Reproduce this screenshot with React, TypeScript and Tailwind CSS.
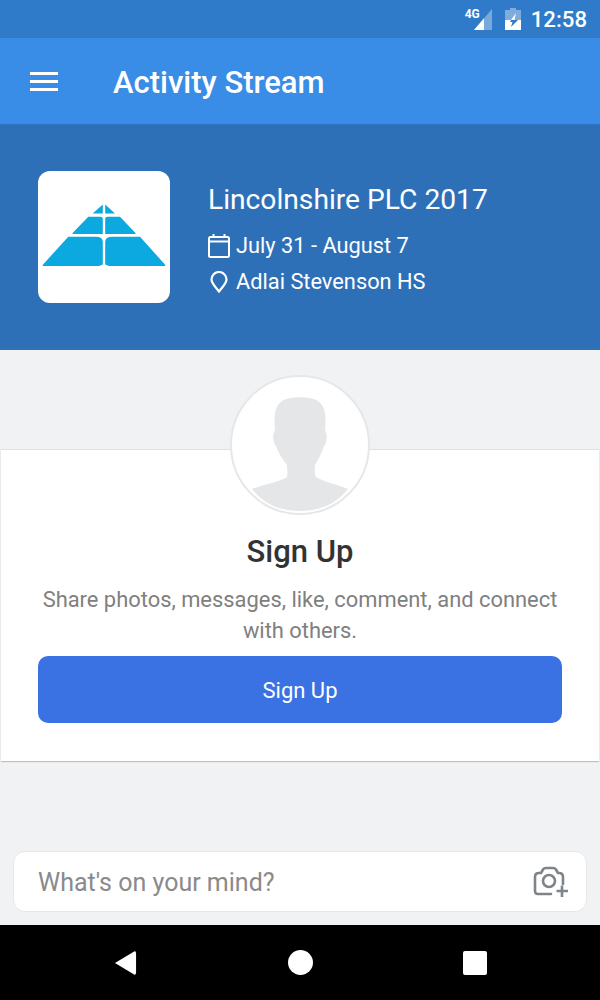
import React from 'react';

function SignalIcon() {
  return (
    <svg width="18" height="21" viewBox="0 0 18 21" className="block">
      <path d="M0 21 L18 0 V21 Z" fill="#ffffff" fillOpacity="0.35" />
      <path d="M0 21 L10 9.3 V21 Z" fill="#ffffff" />
    </svg>
  );
}

function BatteryIcon() {
  return (
    <svg width="16" height="22" viewBox="0 0 16 22" className="block">
      <path d="M5 0 H11 V2 H16 V22 H0 V2 H5 Z" fill="#ffffff" fillOpacity="0.38" />
      <path d="M0 12 H6 L11 5 L9.5 12 H16 V22 H0 Z" fill="#ffffff" />
      <path d="M9.5 12 H13 L6 19 L7.5 14 H5 L6 12 Z" fill="#2f7bc9" />
    </svg>
  );
}

function Logo() {
  return (
    <svg width="132" height="132" viewBox="0 0 132 132">
      <path d="M64.8 33.5 V42.5 H54.7 Z M67.2 33.5 L77 42.5 H67.2 Z" fill="#0ba9e0" />
      <path d="M50.3 45.7 H62 Q64.8 45.7 64.8 48 V63 H35 Q34 63 34.6 62 Z M67.2 48 Q67.2 45.7 70 45.7 H82 L97.5 62 Q98 63 97 63 H67.2 Z" fill="#0ba9e0" />
      <path d="M30.3 65.7 H58 Q64.8 65.7 64.8 71 V93.5 L61 95 H6 Q3.5 95 5.5 93 Z M67.2 71 Q67.2 65.7 74 65.7 H102 L126.5 93 Q128.5 95 126 95 H71 L67.2 93.5 Z" fill="#0ba9e0" />
    </svg>
  );
}

function Avatar() {
  return (
    <svg width="136" height="136" viewBox="0 0 136 136" className="block">
      <path
        d="M20 112 C32 107 48 105 55 100 C56 96 55 92 55 88 C50 82 46 75 44 69 C41 66 40 58 43 53 C42 40 42 30 50 24 C58 19 78 19 86 24 C94 30 94 40 93 53 C96 58 95 66 92 69 C90 75 87 82 83 88 C83 92 82 96 84 100 C92 105 104 107 116 112 C104 127 88 134 68 134 C48 134 32 127 20 112 Z"
        fill="#e5e6e8"
      />
    </svg>
  );
}

export default function App() {
  return (
    <div className="w-[600px] h-[1000px] flex flex-col overflow-hidden bg-[#f1f2f4] font-['Roboto',sans-serif]">
      {/* status bar */}
      <div className="h-[38px] shrink-0 bg-[#2f7bc9] flex items-center justify-end pr-[13px] text-white">
        <div className="relative w-[18px] h-[21px] mt-[1px]">
          <span className="absolute left-[-9px] top-[-1px] text-[12px] leading-none font-bold text-white">4G</span>
          <SignalIcon />
        </div>
        <div className="ml-[13px]"><BatteryIcon /></div>
        <span className="ml-[10px] text-[22.2px] leading-none font-medium">12:58</span>
      </div>

      {/* app bar */}
      <div className="h-[87px] shrink-0 bg-[#3a8de6] flex items-center pl-[30px] border-b border-[#2f74c4]">
        <div className="w-[28px] flex flex-col gap-[5px]">
          <div className="h-[3px] bg-white" />
          <div className="h-[3px] bg-white" />
          <div className="h-[3px] bg-white" />
        </div>
        <h1 className="ml-[55px] mt-[3px] text-[31px] leading-none font-medium text-white">Activity Stream</h1>
      </div>

      {/* event header */}
      <div className="h-[225px] shrink-0 bg-[#2d70b8] flex pl-[38px] pt-[46px] text-white">
        <div className="w-[132px] h-[132px] bg-white rounded-[12px] shrink-0">
          <Logo />
        </div>
        <div className="ml-[38px] pt-[12px]">
          <div className="text-[28.2px] leading-[34px]">Lincolnshire PLC 2017</div>
          <div className="flex items-center mt-[14px] h-[30px]">
            <svg width="22" height="24" viewBox="0 0 22 24" fill="none" stroke="#ffffff" strokeWidth="2" className="shrink-0">
              <rect x="1" y="3" width="20" height="20" rx="1.5" />
              <path d="M1 7.5 H21" />
              <path d="M5.5 0 V4 M16.5 0 V4" />
            </svg>
            <span className="ml-[6px] text-[21.8px] leading-none">July 31 - August 7</span>
          </div>
          <div className="flex items-center mt-[6px] h-[30px]">
            <svg width="18" height="22" viewBox="0 0 18 22" fill="none" stroke="#ffffff" strokeWidth="2.2" className="ml-[2px] mr-[2px] shrink-0">
              <path d="M9 20.5 C6 16.5 1.5 12.5 1.5 8.5 A7.5 7.5 0 0 1 16.5 8.5 C16.5 12.5 12 16.5 9 20.5 Z" />
            </svg>
            <span className="ml-[6px] text-[21.8px] leading-none">Adlai Stevenson HS</span>
          </div>
        </div>
      </div>

      {/* content */}
      <div className="flex-1 flex flex-col">
        <div className="mt-[99px] mx-[1px] h-[312px] bg-white border-t border-[#dfe0e2] shadow-[0_1px_1px_rgba(0,0,0,0.2)] flex flex-col items-center">
          <div className="w-[140px] h-[140px] mt-[-75px] rounded-full bg-white border-2 border-[#e6e7e8] overflow-hidden shrink-0">
            <Avatar />
          </div>
          <h2 className="mt-[19px] text-[31px] leading-[36px] font-medium text-[#333333]">Sign Up</h2>
          <p className="mt-[14px] w-[540px] text-center text-[21.9px] leading-[31px] text-[#808080]">
            Share photos, messages, like, comment, and connect with others.
          </p>
          <button className="mt-[10px] w-[524px] h-[67px] pt-[3px] rounded-[10px] bg-[#3a72e4] text-white text-[22px] leading-none">
            Sign Up
          </button>
        </div>

        <div className="mt-[90px] mx-[13px] h-[61px] bg-white rounded-[12px] border border-[#e6e7e9] flex items-center justify-between pl-[24px] pr-[17px]">
          <span className="pt-[2px] text-[25px] leading-none text-[#8a8a8a]">What's on your mind?</span>
          <svg width="36" height="32" viewBox="0 0 36 32" fill="none" stroke="#7f8489" strokeWidth="2.6" strokeLinecap="round" strokeLinejoin="round" className="shrink-0">
            <path d="M18 28 H5 Q2 28 2 25 V11 Q2 7 6 7 H8 L10 3.5 Q11 2 13 2 H20 Q22 2 23 3.5 L25 7 H26 Q30 7 30 11 V18" />
            <circle cx="16" cy="15" r="6" />
            <path d="M29 19.5 V31 M23.5 25 H35" strokeLinecap="butt" />
          </svg>
        </div>
      </div>

      {/* android nav */}
      <div className="h-[75px] shrink-0 bg-black flex items-center justify-center">
        <svg width="23" height="26" viewBox="0 0 24 26" className="mr-[151px]">
          <path d="M1 13 L21 1 Q23 0 23 3 V23 Q23 26 21 25 Z" fill="#ffffff" />
        </svg>
        <div className="w-[25px] h-[25px] rounded-full bg-white" />
        <div className="w-[24px] h-[24px] rounded-[2px] bg-white ml-[150px]" />
      </div>
    </div>
  );
}
